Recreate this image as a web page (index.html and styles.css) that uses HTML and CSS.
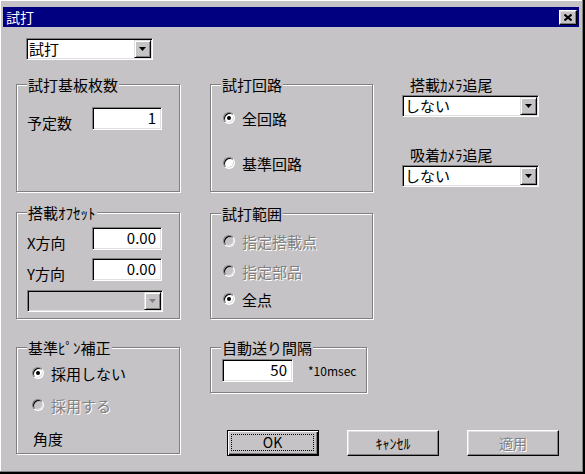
FILE: index.html
```html
<!DOCTYPE html>
<html>
<head>
<meta charset="utf-8">
<title>試打</title>
<link rel="stylesheet" href="styles.css">
</head>
<body>
<div class="win">
	<div class="titlebar">
		<span class="title">試打</span>
		<a href="javascript:;" class="close"><svg width="8" height="7" viewBox="0 0 8 7"><path d="M0.5 0.5L7.5 6.5M7.5 0.5L0.5 6.5" stroke="#000" stroke-width="2"/></svg></a>
	</div>
	<div class="content">
		<!-- left column -->
		<div class="col">
			<div class="combo mode"><span class="val">試打</span><span class="drop"><svg width="7" height="4" viewBox="0 0 7 4"><polygon points="0,0 7,0 3.5,4"/></svg></span></div>
			<div class="group g1">
				<div class="gtitle">試打基板枚数</div>
				<div class="row first"><span class="lbl">予定数</span><span class="edit">1</span></div>
			</div>
			<div class="group g2">
				<div class="gtitle">搭載ｵﾌｾｯﾄ</div>
				<div class="row rx"><span class="lbl">X方向</span><span class="edit">0.00</span></div>
				<div class="row ry"><span class="lbl">Y方向</span><span class="edit">0.00</span></div>
				<div class="combo off"><span class="val"></span><span class="drop"><svg width="7" height="4" viewBox="0 0 7 4"><polygon points="0,0 7,0 3.5,4" fill="#808080"/></svg></span></div>
			</div>
		</div>
		<!-- middle column -->
		<div class="col">
			<div class="group g4">
				<div class="gtitle">試打回路</div>
				<div class="opt o1"><span class="radio on"></span>全回路</div>
				<div class="opt o2"><span class="radio"></span>基準回路</div>
			</div>
			<div class="group g5">
				<div class="gtitle">試打範囲</div>
				<div class="opt o1 dis"><span class="radio"></span>指定搭載点</div>
				<div class="opt o2 dis"><span class="radio"></span>指定部品</div>
				<div class="opt o3"><span class="radio on"></span>全点</div>
			</div>
		</div>
		<!-- right column -->
		<div class="col cams">
			<div class="clbl first">搭載ｶﾒﾗ追尾</div>
			<div class="combo cam"><span class="val">しない</span><span class="drop"><svg width="7" height="4" viewBox="0 0 7 4"><polygon points="0,0 7,0 3.5,4"/></svg></span></div>
			<div class="clbl">吸着ｶﾒﾗ追尾</div>
			<div class="combo cam"><span class="val">しない</span><span class="drop"><svg width="7" height="4" viewBox="0 0 7 4"><polygon points="0,0 7,0 3.5,4"/></svg></span></div>
		</div>
		<!-- bottom row -->
		<div class="group g3">
			<div class="gtitle">基準ﾋﾟﾝ補正</div>
			<div class="opt o1"><span class="radio on"></span>採用しない</div>
			<div class="opt o2 dis"><span class="radio"></span>採用する</div>
			<div class="opt o3">角度</div>
		</div>
		<div class="bottom">
			<div class="group g6">
				<div class="gtitle">自動送り間隔</div>
				<div class="row"><span class="edit">50</span><span class="unit">*10msec</span></div>
			</div>
			<div class="buttons">
				<a href="javascript:;" class="btn def"><span>OK</span></a>
				<a href="javascript:;" class="btn">ｷｬﾝｾﾙ</a>
				<a href="javascript:;" class="btn dis">適用</a>
			</div>
		</div>
	</div>
</div>
</body>
</html>
```

FILE: styles.css
```css
*{margin:0;padding:0;box-sizing:border-box;}
body{width:585px;height:474px;overflow:hidden;background:#c6c3c6;font:15px/15px "Noto Sans CJK JP","Liberation Sans",sans-serif;color:#000;}
a{color:#000;text-decoration:none;}

.win{width:585px;height:474px;padding:7px 4px 0 3px;background:#c6c3c6;border-right:2px solid #000;border-bottom:2px solid #000;box-shadow:inset -1px -1px #808080, inset 1px 1px #fff;}

.titlebar{height:20px;background:#000080;display:flex;align-items:center;justify-content:space-between;padding:0 2px 0 3px;}
.titlebar .title{color:#fff;font-size:14px;line-height:20px;}
.close{width:18px;height:15px;display:flex;align-items:center;justify-content:center;background:#c6c3c6;border:1px solid;border-color:#fff #000 #000 #fff;box-shadow:inset -1px -1px #808080, inset 1px 1px #dfdfdf;}

.content{display:grid;grid-template-columns:164px 163px 138px;column-gap:30px;row-gap:28px;padding:11px 0 0 13px;}
.col{display:flex;flex-direction:column;}

/* sunken field + dropdown */
.combo{display:flex;height:22px;padding:1px;background:#fff;border:1px solid;border-color:#808080 #fff #fff #808080;box-shadow:inset 1px 1px #000, inset -1px -1px #dfdfdf;}
.combo .val{flex:1;padding-left:1px;line-height:18px;}
.combo .drop{width:17px;height:18px;display:flex;align-items:center;justify-content:center;background:#c6c3c6;border:1px solid;border-color:#dfdfdf #000 #000 #dfdfdf;box-shadow:inset 1px 1px #fff, inset -1px -1px #808080;}
.combo.off{background:#c6c3c6;}
.mode{width:127px;margin-left:10px;}
.cam{width:137px;margin-left:-1px;}

.edit{width:70px;height:23px;background:#fff;text-align:right;padding-right:5px;line-height:20px;border:1px solid;border-color:#808080 #fff #fff #808080;box-shadow:inset 1px 1px #000, inset -1px -1px #dfdfdf;}

/* group boxes */
.group{border:1px solid #808080;box-shadow:inset 1px 1px #fff, 1px 1px #fff;padding-left:10px;}
.gtitle{width:fit-content;margin-top:-8px;padding:0 1px;background:#c6c3c6;line-height:15px;}
.row{display:flex;align-items:flex-end;}
.lbl{width:65px;}

.g1{margin-top:24px;height:108px;}
.g1 .row{margin-top:15px;}
.g2{margin-top:20px;height:107px;}
.g2 .rx{margin-top:7px;}
.g2 .ry{margin-top:8px;}
.g2 .combo{width:136px;margin-top:9px;}

.opt{display:flex;align-items:center;height:20px;gap:7px;}
.radio{flex:none;width:12px;height:12px;border-radius:50%;background:#fff;display:flex;align-items:center;justify-content:center;border:1px solid;border-color:#808080 #fff #fff #808080;box-shadow:inset 1px 1px #000, inset -1px -1px #dfdfdf;}
.radio.on::after{content:"";width:4px;height:4px;border-radius:50%;background:#000;}
.dis{color:#808080;text-shadow:1px 1px #fff;}
.dis .radio{background:#c6c3c6;}

.g4{margin-top:46px;height:108px;}
.g4 .opt{margin-left:2px;}
.g4 .o1{margin-top:16px;}
.g4 .o2{margin-top:25px;}
.g5{margin-top:21px;height:106px;}
.g5 .opt{margin-left:2px;}
.g5 .o1{margin-top:10px;}
.g5 .o2{margin-top:10px;}
.g5 .o3{margin-top:8px;}

.g3{height:107px;}
.g3 .opt{margin-left:5px;}
.g3 .o1{margin-top:8px;}
.g3 .o2{margin-top:12px;}
.g3 .o3{margin-top:13px;margin-left:6px;}

.cams .clbl{margin:30px 0 0 7px;}
.cams .clbl.first{margin-top:39px;}
.cams .combo{margin-top:3px;}

.bottom{grid-column:2 / 4;display:flex;flex-direction:column;}
.g6{width:157px;height:46px;}
.g6 .row{margin-top:4px;align-items:center;}
.g6 .edit{margin-left:1px;width:71px;}
.unit{margin-left:15px;font-size:12px;}

.buttons{display:flex;gap:28px;margin-top:37px;padding-left:17px;}
.btn{flex:none;width:92px;height:26px;display:flex;align-items:center;justify-content:center;font-size:14px;background:#c6c3c6;border:1px solid;border-color:#fff #000 #000 #fff;box-shadow:inset -1px -1px #808080, inset 1px 1px #dfdfdf;}
.btn.def{border-color:#000;box-shadow:inset 1px 1px #fff, inset -1px -1px #000, inset -2px -2px #808080;padding:3px 4px 4px 3px;}
.btn.def span{flex:1;align-self:stretch;display:flex;align-items:center;justify-content:center;border:1px dotted #000;}
```
